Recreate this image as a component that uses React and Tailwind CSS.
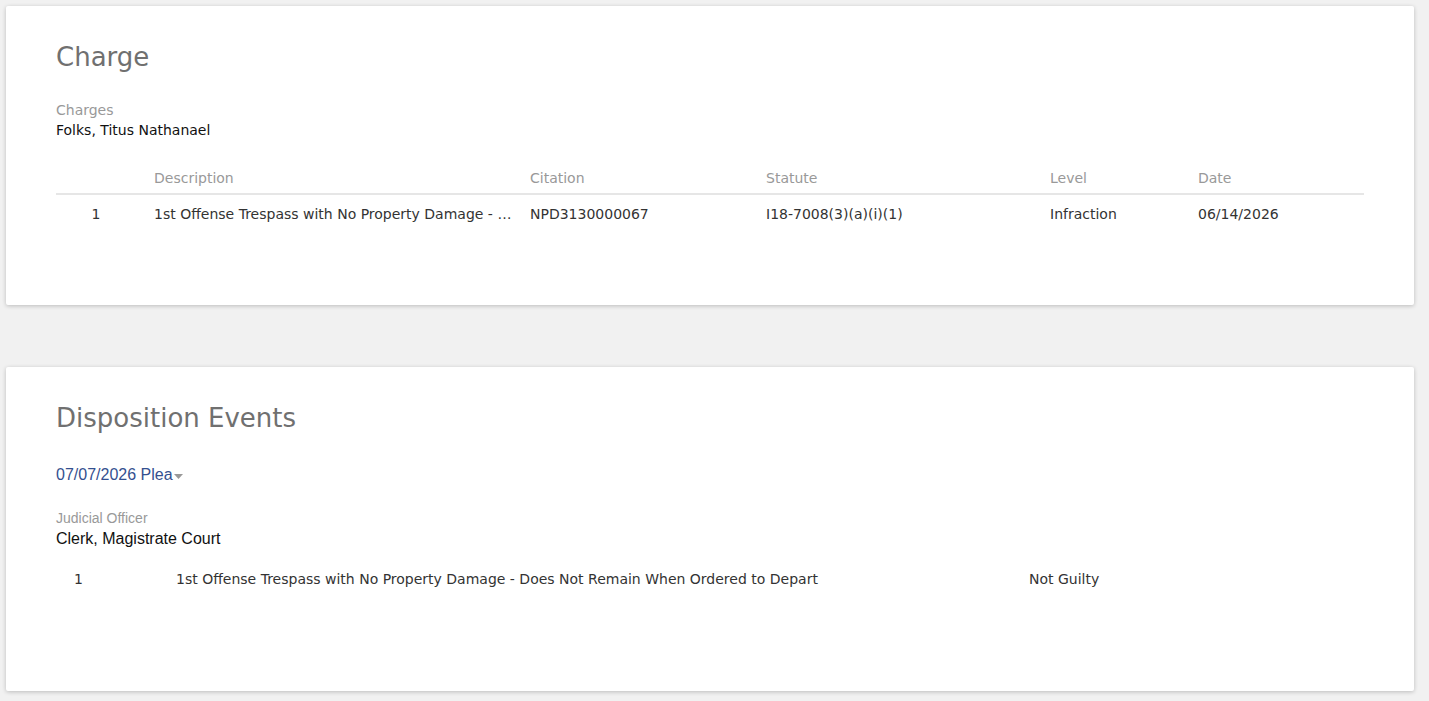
import React from 'react';

const verdana = "font-['Verdana','DejaVu_Sans',sans-serif]";
const arial = "font-['Arial','Liberation_Sans',sans-serif]";

const charges = [
    {
        num: 1,
        description: '1st Offense Trespass with No Property Damage - Does Not Remain When Ordered to Depart',
        citation: 'NPD3130000067',
        statute: 'I18-7008(3)(a)(i)(1)',
        level: 'Infraction',
        date: '06/14/2026',
    },
];

const Card = ({ className = '', children }) => (
    <div className={`bg-white rounded-[2px] shadow-[0_1px_4px_rgba(0,0,0,0.22)] px-[50px] ${className}`}>
        {children}
    </div>
);

const ChargeCard = () => (
    <Card className="pt-[36px] pb-[81px]">
        <h2 className={`${verdana} text-[26px] leading-[31px] text-[#707070]`}>Charge</h2>

        <div className={`${verdana} mt-[27px] text-[14px] leading-[20px]`}>
            <p className="text-[#999999]">Charges</p>
            <p className="text-[#111111]">Folks, Titus Nathanael</p>
        </div>

        {/* charges table */}
        <div className={`${verdana} mt-[28px] text-[14px] leading-[20px]`}>
            <div className="grid grid-cols-[98px_376px_236px_284px_148px_1fr] pb-[5px] border-b-2 border-[#e6e6e6] text-[#999999]">
                <span />
                <span>Description</span>
                <span>Citation</span>
                <span>Statute</span>
                <span>Level</span>
                <span>Date</span>
            </div>
            {charges.map((c) => (
                <div key={c.num} className="grid grid-cols-[98px_376px_236px_284px_148px_1fr] pt-[9px] text-[#333333]">
                    <span className="w-[80px] text-center">{c.num}</span>
                    <span className="truncate pr-[16px]">{c.description}</span>
                    <span>{c.citation}</span>
                    <span>{c.statute}</span>
                    <span>{c.level}</span>
                    <span>{c.date}</span>
                </div>
            ))}
        </div>
    </Card>
);

const DispositionCard = () => (
    <Card className="pt-[36px] pb-[102px]">
        <h2 className={`${verdana} text-[26px] leading-[31px] text-[#707070]`}>Disposition Events</h2>

        <button className={`${arial} mt-[31px] flex items-center text-[16px] leading-[20px] text-[#34508f]`}>
            07/07/2026 Plea
            <svg width="9" height="5" viewBox="0 0 9 5" className="ml-[1px] mt-[2px]">
                <path d="M0 0h9L4.5 5z" fill="#999999" />
            </svg>
        </button>

        <div className={`${arial} mt-[23px]`}>
            <p className="text-[14px] leading-[20px] text-[#999999]">Judicial Officer</p>
            <p className="text-[16px] leading-[22px] text-[#111111]">Clerk, Magistrate Court</p>
        </div>

        <div className={`${verdana} mt-[19px] grid grid-cols-[120px_853px_1fr] text-[14px] leading-[20px] text-[#333333]`}>
            <span className="pl-[18px]">1</span>
            <span>1st Offense Trespass with No Property Damage - Does Not Remain When Ordered to Depart</span>
            <span>Not Guilty</span>
        </div>
    </Card>
);

export default function App() {
    return (
        <div className="min-h-screen bg-[#f1f1f1] pt-[6px] pl-[6px] pr-[15px] pb-[10px]">
            <ChargeCard />
            <div className="h-[62px]" />
            <DispositionCard />
        </div>
    );
}
